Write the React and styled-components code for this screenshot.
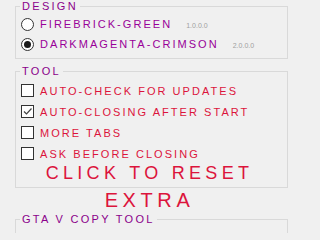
import React from "react";
import styled, { createGlobalStyle } from "styled-components";

const GlobalStyle = createGlobalStyle`
  html, body {
    margin: 0;
    padding: 0;
    background: #f0f0f0;
    overflow: hidden;
  }
  body {
    font-family: "Liberation Sans", Arial, sans-serif;
  }
`;

const Page = styled.div`
  width: 299px;
  height: 233px;
  overflow: hidden;
  padding-left: 15px;
  box-sizing: border-box;
`;

const Group = styled.fieldset`
  width: 273px;
  box-sizing: border-box;
  margin: ${(p) => p.$top || 0}px 0 0 0;
  padding: ${(p) => p.$padTop || 0}px 0 ${(p) => p.$padBottom || 0}px 0;
  border: 1px solid #d9d9d9;
  min-height: ${(p) => p.$minHeight || 0}px;
  display: flex;
  flex-direction: column;
`;

const Legend = styled.legend`
  margin-left: 4px;
  padding: 0 2px;
  font-size: 11px;
  line-height: 12px;
  letter-spacing: 2.3px;
  color: #8b008b;
`;

const Row = styled.label`
  display: flex;
  flex-shrink: 0;
  align-items: center;
  height: ${(p) => p.$h || 20}px;
  padding-left: 5px;
  gap: 6px;
  font-size: 11px;
  letter-spacing: 2.05px;
  color: ${(p) => p.$color};
  white-space: nowrap;
`;

const Radio = styled.span`
  width: 13px;
  height: 13px;
  box-sizing: border-box;
  border-radius: 50%;
  border: 1px solid #333;
  background: #fff;
  display: flex;
  align-items: center;
  justify-content: center;
  flex-shrink: 0;

  &::after {
    content: "";
    width: 7px;
    height: 7px;
    border-radius: 50%;
    background: #1a1a1a;
    display: ${(p) => (p.$on ? "block" : "none")};
  }
`;

const Box = styled.span`
  width: 13px;
  height: 13px;
  box-sizing: border-box;
  border: 1px solid #333;
  background: #fff;
  display: flex;
  align-items: center;
  justify-content: center;
  flex-shrink: 0;
`;

const LabelText = styled.span`
  display: flex;
  align-items: baseline;
`;

const Version = styled.span`
  margin-left: 14px;
  font-size: 7px;
  letter-spacing: 0;
  color: #a0a0a0;
`;

const Reset = styled.div`
  padding-right: 4px;
  text-align: center;
  font-size: 18px;
  line-height: 18px;
  letter-spacing: 4.3px;
  color: #dc143c;
  white-space: nowrap;
`;

const Extra = styled.div`
  margin: 2px 0 0 -15px;
  width: 299px;
  text-align: center;
  font-size: 20px;
  line-height: 20px;
  letter-spacing: 4.6px;
  color: #dc143c;
`;

const Check = () => (
  <svg width="11" height="11" viewBox="0 0 11 11">
    <path d="M2 5.5 L4.5 8 L9.5 2.5" fill="none" stroke="#444" strokeWidth="1.2" />
  </svg>
);

const designs = [
  { name: "FIREBRICK-GREEN", version: "1.0.0.0", on: false },
  { name: "DARKMAGENTA-CRIMSON", version: "2.0.0.0", on: true },
];

const tools = [
  { name: "AUTO-CHECK FOR UPDATES", on: false },
  { name: "AUTO-CLOSING AFTER START", on: true },
  { name: "MORE TABS", on: false },
  { name: "ASK BEFORE CLOSING", on: false },
];

export default function App() {
  return (
    <>
      <GlobalStyle />
      <Page>
        <Group $padTop={2} $padBottom={4}>
          <Legend>DESIGN</Legend>
          {designs.map((d) => (
            <Row key={d.name} $color="#990099">
              <Radio $on={d.on} />
              <LabelText>
                {d.name}
                <Version>{d.version}</Version>
              </LabelText>
            </Row>
          ))}
        </Group>

        <Group $top={6} $padTop={3} $padBottom={5}>
          <Legend>TOOL</Legend>
          {tools.map((t) => (
            <Row key={t.name} $h={21} $color="#dc143c">
              <Box>{t.on && <Check />}</Box>
              {t.name}
            </Row>
          ))}
          <Reset>CLICK TO RESET</Reset>
        </Group>

        <Extra>EXTRA</Extra>

        <Group $top={3} $minHeight={60}>
          <Legend>GTA V COPY TOOL</Legend>
        </Group>
      </Page>
    </>
  );
}
